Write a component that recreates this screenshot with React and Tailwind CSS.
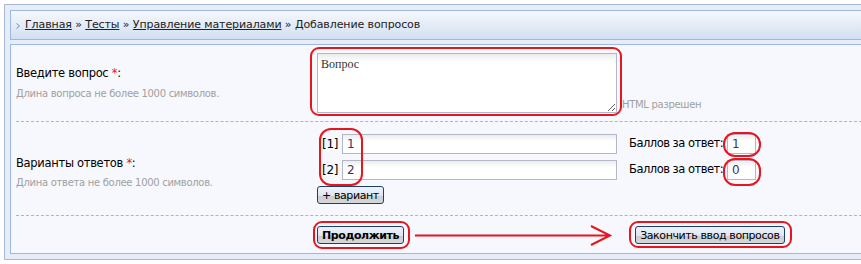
import React from 'react';

const RedRing = ({ className }) => (
  <div className={`pointer-events-none absolute rounded-[9px] border-2 border-[#e8141e] ${className}`} />
);

const Btn = ({ children, bold }) => (
  <button
    className={`h-[18px] rounded-[3px] border border-[#1d3f6c] bg-[linear-gradient(#edf2fa_0%,#dfe6f1_55%,#c9ccd3_56%,#d8d8d8_100%)] px-[4px] text-[11px] leading-[15px] tracking-[-0.4px] text-black ${bold ? 'font-bold' : ''}`}
  >
    {children}
  </button>
);

export default function App() {
  return (
    <div className="h-[264px] w-[861px] overflow-hidden bg-white font-['DejaVu_Sans',sans-serif] text-[11px] text-black">
      <div className="ml-[4px] mt-[4px] w-[900px] border border-[#a9b8d2] bg-[#e6edf8] p-[5px]">
        {/* breadcrumb */}
        <div className="flex h-[30px] items-center gap-[5px] border border-[#9db9e3] bg-[linear-gradient(#f6f8fc,#d2dff1)] pl-[5px]">
          <svg width="4" height="6" viewBox="0 0 4 6" className="mt-[1px]">
            <path d="M0.5 0.5 L3.5 3 L0.5 5.5" fill="none" stroke="#6f8fbf" strokeWidth="1" />
          </svg>
          <div className="tracking-[-0.1px] text-[#222]">
            <span className="underline">Главная</span> » <span className="underline">Тесты</span> »{' '}
            <span className="underline">Управление материалами</span> » Добавление вопросов
          </div>
        </div>

        {/* form body */}
        <div className="mt-[4px] h-[210px] border border-[#9db9e3] bg-[#f7f8fd]">
          {/* question */}
          <div className="ml-[5px] grid h-[77px] grid-cols-[301px_1fr] border-b border-dashed border-[#9fb5ea]">
            <div className="flex flex-col justify-center">
              <div className="text-[11.5px] tracking-[-0.3px]">
                Введите вопрос <span className="text-[#e8141e]">*</span>:
              </div>
              <div className="mt-[3px] text-[10px] tracking-[-0.3px] text-[#a0a0a0]">
                Длина вопроса не более 1000 символов.
              </div>
            </div>
            <div className="flex items-end gap-[5px] pb-[8px]">
              <div className="relative">
                <textarea
                  defaultValue="Вопрос"
                  className="block h-[60px] w-[300px] border border-[#b2b7c9] bg-[linear-gradient(#ececec,#ffffff_8px)] px-[3px] py-[3px] font-['Liberation_Serif',serif] text-[12px] leading-[14px] text-[#333]"
                />
                <RedRing className="-bottom-[3px] -left-[7px] -right-[5px] -top-[6px]" />
              </div>
              <span className="mb-[1px] text-[10px] tracking-[-0.3px] text-[#a0a0a0]">HTML разрешен</span>
            </div>
          </div>

          {/* answers */}
          <div className="ml-[5px] grid h-[94px] grid-cols-[301px_1fr] border-b border-dashed border-[#9fb5ea]">
            <div className="flex flex-col justify-center pt-[8px]">
              <div className="text-[11.5px] tracking-[-0.3px]">
                Варианты ответов <span className="text-[#e8141e]">*</span>:
              </div>
              <div className="mt-[3px] text-[10px] tracking-[-0.3px] text-[#a0a0a0]">
                Длина ответа не более 1000 символов.
              </div>
            </div>
            <div className="relative pt-[12px]">
              <div className="flex flex-col gap-[6px]">
                {[
                  ['1', '1'],
                  ['2', '0'],
                ].map(([n, score]) => (
                  <div key={n} className="flex items-center">
                    <span className="ml-[5px] w-[20px] text-[12px] tracking-[-0.3px]">[{n}]</span>
                    <input
                      defaultValue={n}
                      className="h-[20px] w-[275px] border border-[#b2b7c9] bg-[linear-gradient(#ececec,#ffffff_6px)] px-[4px] text-[12px] text-[#3b3370] outline-none"
                    />
                    <span className="ml-[12px] w-[98px] text-[11.5px] tracking-[-0.5px]">Баллов за ответ:</span>
                    <input
                      defaultValue={score}
                      className="h-[20px] w-[29px] border border-[#b2b7c9] bg-[linear-gradient(#ececec,#ffffff_6px)] px-[4px] text-[12px] text-[#3b3370] outline-none"
                    />
                  </div>
                ))}
              </div>
              <div className="mt-[6px]">
                <Btn>+ вариант</Btn>
              </div>
              <RedRing className="left-[2px] top-[6px] h-[58px] w-[44px] rounded-[12px]" />
              <RedRing className="left-[406px] top-[10px] h-[25px] w-[38px] rounded-[12px]" />
              <RedRing className="left-[406px] top-[36px] h-[28px] w-[38px] rounded-[12px]" />
            </div>
          </div>

          {/* actions */}
          <div className="ml-[5px] grid h-[37px] grid-cols-[301px_1fr]">
            <div />
            <div className="flex items-start pt-[10px]">
              <div className="relative">
                <Btn bold>Продолжить</Btn>
                <RedRing className="-bottom-[5px] -left-[4px] -right-[6px] -top-[5px]" />
              </div>
              <svg width="220" height="26" viewBox="0 0 220 26" className="-mt-[6px] ml-[4px] shrink-0">
                <path d="M7 15.5 H202 M183 6 L202 15.5 L183 25" fill="none" stroke="#e8141e" strokeWidth="2" />
              </svg>
              <div className="relative ml-[7px]">
                <Btn>Закончить ввод вопросов</Btn>
                <RedRing className="-bottom-[4px] -left-[6px] -right-[7px] -top-[5px]" />
              </div>
            </div>
          </div>
        </div>
      </div>
    </div>
  );
}
